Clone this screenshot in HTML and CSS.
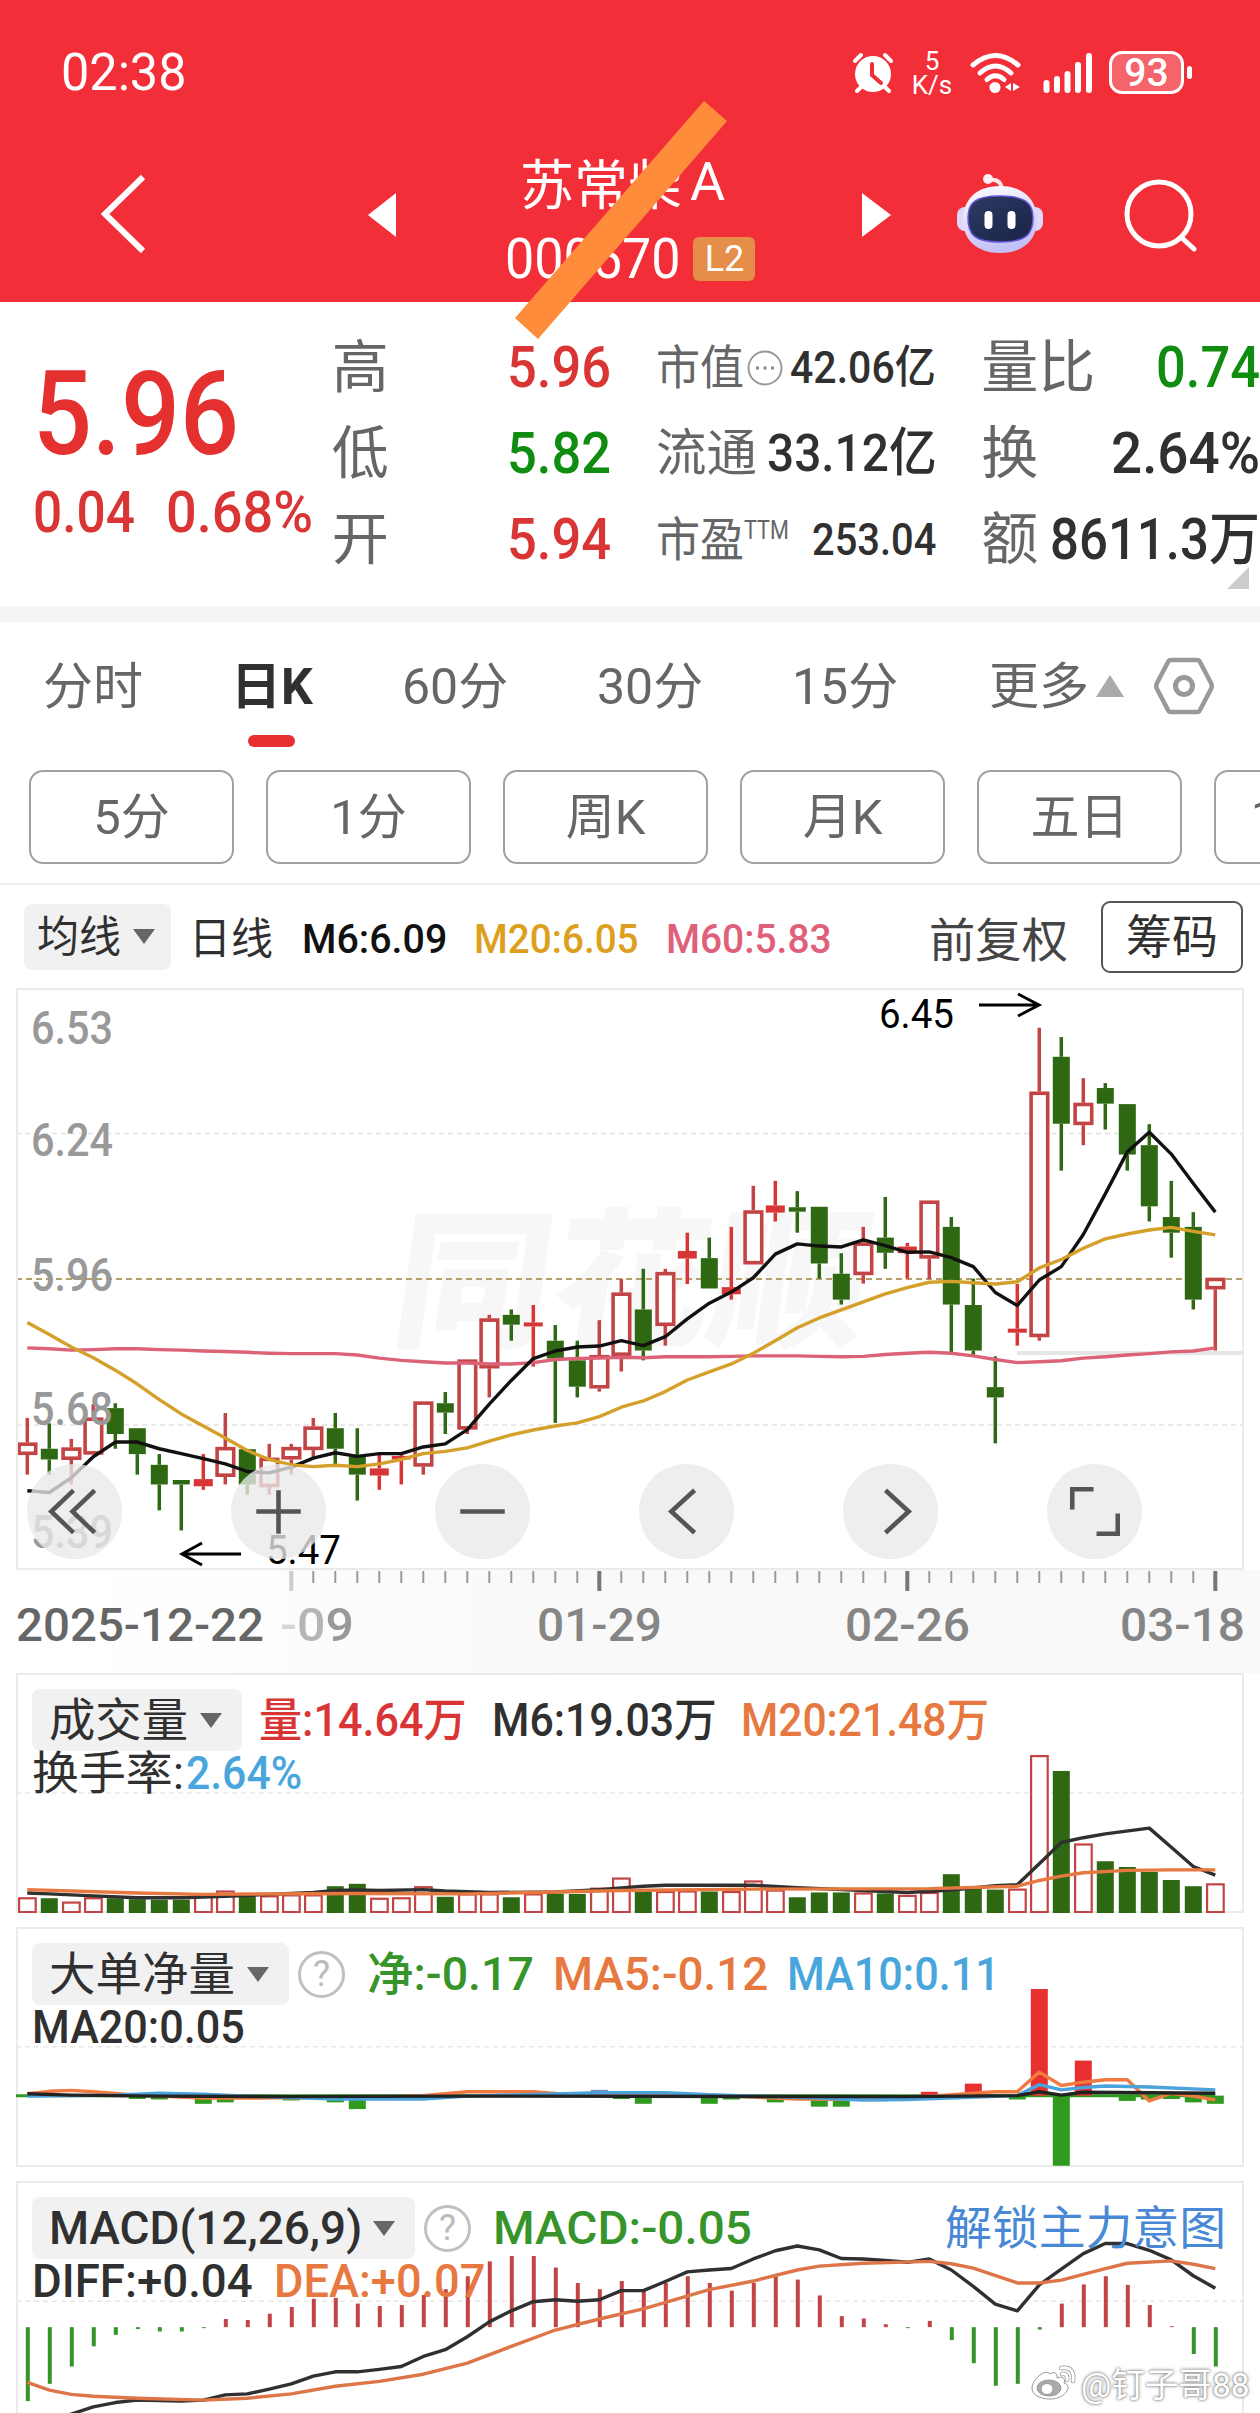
FILE: index.html
```html
<!DOCTYPE html>
<html lang="zh-CN">
<head>
    <meta charset="UTF-8">
    <meta name="viewport" content="width=device-width, initial-scale=1.0">
    <title>苏常柴A 000570</title>
    <link rel="stylesheet" href="styles.css">
</head>
<body>
    <header class="header">
        <div class="status-bar">
            <span class="time fit" data-w="126">02:38</span>
            <div class="status-icons">
                <svg class="alarm" width="42" height="42" viewBox="0 0 42 42">
                    <g stroke="#fff" stroke-width="4" stroke-linecap="round" fill="none">
                        <path d="M3 9l6-6M39 9l-6-6M10 34l-5 5M32 34l5 5"/>
                    </g>
                    <circle cx="21" cy="22" r="18" fill="#fff"/>
                    <path d="M20 12v11l9 8" stroke="#f22e38" stroke-width="4" fill="none" stroke-linecap="round"/>
                </svg>
                <div class="speed"><span>5</span><span>K/s</span></div>
                <svg class="wifi" width="51" height="42" viewBox="0 0 51 42">
                    <g stroke="#fff" stroke-width="5" stroke-linecap="round" fill="none">
                        <path d="M3 13Q25.500-6 48 13"/>
                        <path d="M10 21Q25.500 7 41 21"/>
                        <path d="M17 27.500Q25.500 20 34 27.500"/>
                    </g>
                    <circle cx="25" cy="35.500" r="5.500" fill="#fff"/>
                    <path d="M41 31v8l-6-4zM43 31v8l7-4z" fill="#fff"/>
                </svg>
                <svg class="signal" width="50" height="42" viewBox="0 0 50 42">
                    <path d="M3.500 31v7M14 27v11M24.500 22v16M35 13v25M46 4v34" stroke="#fff" stroke-width="6" stroke-linecap="round"/>
                </svg>
                <div class="battery">93</div>
            </div>
        </div>
        <nav class="nav-bar">
            <svg class="back" width="46" height="80" viewBox="0 0 46 80"><path d="M42 3L4 40l38 37" fill="none" stroke="#fff" stroke-width="6"/></svg>
            <svg class="prev" width="28" height="44" viewBox="0 0 28 44"><path d="M28 0v44L0 22z" fill="#fff"/></svg>
            <div class="title">
                <div class="stock-name">苏常柴<span>A</span></div>
                <div class="stock-code"><span class="fit" data-w="175">000570</span><span class="level">L2</span></div>
            </div>
            <svg class="next" width="29" height="44" viewBox="0 0 29 44"><path d="M0 0v44l29-22z" fill="#fff"/></svg>
            <svg class="robot" width="88" height="82" viewBox="0 0 88 82">
                <defs>
                    <linearGradient id="head" x1="0" y1="0" x2="0.3" y2="1">
                        <stop offset="0" stop-color="#fff"/><stop offset=".5" stop-color="#e3e0fb"/><stop offset="1" stop-color="#c3c0f5"/>
                    </linearGradient>
                    <linearGradient id="face" x1="0" y1="0" x2="1" y2="1">
                        <stop offset="0" stop-color="#2d3a63"/><stop offset="1" stop-color="#1a2348"/>
                    </linearGradient>
                </defs>
                <path d="M33 7q11-2 13 8" fill="none" stroke="#ffe3ea" stroke-width="4"/>
                <circle cx="32" cy="6" r="5" fill="#ffeef2"/>
                <rect x="1" y="34" width="86" height="24" rx="8" fill="#dcd9fa"/>
                <path d="M44 13c24 0 37 14 37 34S67 80 44 80 7 67 7 47s13-34 37-34z" fill="url(#head)"/>
                <path d="M44 23c25 0 33 7 33 22 0 17-8 24-33 24S12 62 12 45c0-15 7-22 32-22z" fill="url(#face)" stroke="#6254d8" stroke-width="1.500"/>
                <path d="M32.500 42v10M55.500 42v10" stroke="#fff" stroke-width="8" stroke-linecap="round"/>
            </svg>
            <svg class="search" width="76" height="76" viewBox="0 0 76 76"><circle cx="36" cy="36" r="32" fill="none" stroke="#fff" stroke-width="5"/><path d="M59 60l12 11" stroke="#fff" stroke-width="5" stroke-linecap="round"/></svg>
        </nav>
        <svg class="slash" width="212" height="238" viewBox="0 0 212 238"><path d="M189 0l23 20L23 238 0 217z" fill="#ff8c3a"/></svg>
    </header>

    <section class="quote">
        <div class="price">
            <div class="last"><span class="fit" data-w="206">5.96</span></div>
            <div class="change"><span class="fit" data-w="102">0.04</span><span class="fit" data-w="147">0.68%</span></div>
        </div>
        <div class="col">
            <div class="row"><label>高</label><b class="red"><span class="fit" data-w="104">5.96</span></b></div>
            <div class="row"><label>低</label><b class="green"><span class="fit" data-w="104">5.82</span></b></div>
            <div class="row"><label>开</label><b class="red"><span class="fit" data-w="104">5.94</span></b></div>
        </div>
        <div class="col small">
            <div class="row"><label><span class="fit" data-w="88">市值</span><svg class="dots" width="38" height="38" viewBox="0 0 38 38"><circle cx="19" cy="19" r="16.500" fill="none" stroke="#999" stroke-width="2"/><path d="M10 19h3M17.500 19h3M25 19h3" stroke="#888" stroke-width="3"/></svg></label><b><span class="fit" data-w="146">42.06亿</span></b></div>
            <div class="row wide"><label><span class="fit" data-w="101">流通</span></label><b><span class="fit" data-w="170">33.12亿</span></b></div>
            <div class="row"><label><span class="fit" data-w="88">市盈</span><sup><span class="fit" data-w="45">TTM</span></sup></label><b><span class="fit" data-w="124">253.04</span></b></div>
        </div>
        <div class="col last-col">
            <div class="row"><label>量比</label><b class="green"><span class="fit" data-w="104">0.74</span></b></div>
            <div class="row"><label>换</label><b><span class="fit" data-w="149">2.64%</span></b></div>
            <div class="row"><label>额</label><b><span class="fit" data-w="210">8611.3万</span></b></div>
        </div>
        <i class="corner"></i>
    </section>

    <nav class="tabs">
        <span>分时</span>
        <span class="active">日K</span>
        <span>60分</span>
        <span>30分</span>
        <span>15分</span>
        <span class="more">更多</span>
        <i class="tri-up"></i>
        <svg class="setting" width="60" height="58" viewBox="0 0 60 58"><path d="M17 3h26q2 0 3 2l11 21q1.500 3 0 6L46 53q-1 2-3 2H17q-2 0-3-2L3 32q-1.500-3 0-6L14 5q1-2 3-2z" fill="none" stroke="#999" stroke-width="4.500"/><circle cx="30" cy="29" r="8.500" fill="none" stroke="#999" stroke-width="5"/></svg>
    </nav>
    <div class="periods">
        <span>5分</span><span>1分</span><span>周K</span><span>月K</span><span>五日</span><span>120分</span>
    </div>

    <div class="ma-bar">
        <div class="pill"><span class="fit" data-w="84">均线</span><i class="tri-down"></i></div>
        <span class="fit day" data-w="84">日线</span>
        <span class="fit ma6" data-w="145">M6:6.09</span>
        <span class="fit ma20" data-w="165">M20:6.05</span>
        <span class="fit ma60" data-w="166">M60:5.83</span>
        <span class="fit restore" data-w="139">前复权</span>
        <span class="chip">筹码</span>
    </div>

    <section class="k-panel">
        <svg id="kChart" width="1228" height="582" viewBox="16 988 1228 582"></svg>
        <div class="controls">
            <button><svg viewBox="0 0 94 94"><path d="M46 26L24 47l22 21M67 26L45 47l22 21"/></svg></button>
            <button><svg viewBox="0 0 94 94"><path d="M25 47h44M47 26v43"/></svg></button>
            <button><svg viewBox="0 0 94 94"><path d="M25 47h44"/></svg></button>
            <button><svg viewBox="0 0 94 94"><path d="M55 26L32 47l23 21"/></svg></button>
            <button><svg viewBox="0 0 94 94"><path d="M42 26l23 21-23 21"/></svg></button>
            <button><svg viewBox="0 0 94 94"><path d="M25 45V25h21M49 69h21V49"/></svg></button>
        </div>
    </section>
    <svg id="axis" width="1260" height="103" viewBox="0 1570 1260 103"></svg>

    <section class="panel volume">
        <svg id="volChart" width="1228" height="240" viewBox="16 1673 1228 240"></svg>
        <div class="line">
            <div class="pill"><span class="fit" data-w="139">成交量</span><i class="tri-down"></i></div>
            <span class="fit red" data-w="208">量:14.64万</span>
            <span class="fit" data-w="225">M6:19.03万</span>
            <span class="fit orange" data-w="248">M20:21.48万</span>
        </div>
        <div class="line second"><span class="fit" data-w="152">换手率:</span><span class="fit blue" data-w="116">2.64%</span></div>
    </section>

    <section class="panel net">
        <svg id="netChart" width="1228" height="240" viewBox="16 1927 1228 240"></svg>
        <div class="line">
            <div class="pill"><span class="fit" data-w="186">大单净量</span><i class="tri-down"></i></div>
            <i class="help">?</i>
            <span class="fit green" data-w="167">净:-0.17</span>
            <span class="fit orange" data-w="215">MA5:-0.12</span>
            <span class="fit blue" data-w="213">MA10:0.11</span>
        </div>
        <div class="line second"><span class="fit" data-w="213">MA20:0.05</span></div>
    </section>

    <section class="panel macd">
        <svg id="macdChart" width="1228" height="232" viewBox="16 2181 1228 232"></svg>
        <div class="line">
            <div class="pill"><span class="fit" data-w="313">MACD(12,26,9)</span><i class="tri-down"></i></div>
            <i class="help">?</i>
            <span class="fit green" data-w="259">MACD:-0.05</span>
            <span class="fit unlock" data-w="281">解锁主力意图</span>
        </div>
        <div class="line second"><span class="fit" data-w="221">DIFF:+0.04</span><span class="fit orange dea" data-w="211">DEA:+0.07</span></div>
    </section>

    <div class="author">
        <svg width="46" height="36" viewBox="0 0 46 36">
            <g fill="#fff" stroke="#999" stroke-width="1">
                <path d="M19 9c4-3 8-1 7 4 5-2 9 0 7 5 4 1 5 4 3 8-3 5-9 8-17 8C9 34 1 30 1 23 1 15 14 3 19 9z"/>
                <ellipse cx="18" cy="23" rx="12" ry="8" fill="#aaa"/>
                <ellipse cx="16" cy="24" rx="6" ry="5.500"/>
            </g>
            <path d="M31 9q6-1 5 6M30 3q14-2 12 13" fill="none" stroke="#999" stroke-width="4.500" stroke-linecap="round"/>
            <path d="M31 9q6-1 5 6M30 3q14-2 12 13" fill="none" stroke="#fff" stroke-width="3" stroke-linecap="round"/>
        </svg>
        <span class="fit" data-w="169">@钉子哥88</span>
    </div>

    <script src="chart.js"></script>
</body>
</html>
```
FILE: styles.css
```css
* {
    box-sizing: border-box;
}

body {
    margin: 0;
    width: 1260px;
    height: 2413px;
    overflow: hidden;
    position: relative;
    background: #fff;
    color: #303030;
    font-family: Roboto, "Noto Sans CJK SC", sans-serif;
}

svg {
    display: block;
    flex: none;
}

i {
    font-style: normal;
}

.fit {
    display: inline-block;
    flex: none;
    white-space: nowrap;
    transform-origin: 0 50%;
}

.red { color: #d93535; }
.green { color: #108c10; }
.orange { color: #e67840; }
.blue { color: #48a6dc; }

/* header */
.header {
    height: 302px;
    background: #f22e38;
    color: #fff;
    position: relative;
}

.status-bar {
    display: flex;
    justify-content: space-between;
    align-items: center;
    height: 145px;
    padding: 0 68px 0 61px;
}

.time {
    font-size: 52px;
}

.status-icons {
    display: flex;
    align-items: center;
}

.speed {
    display: flex;
    flex-direction: column;
    align-items: center;
    width: 40px;
    margin: 0 18px;
    font-size: 26px;
    line-height: 24px;
}

.signal {
    margin: 0 16px 0 22px;
}

.battery {
    position: relative;
    width: 75px;
    height: 43px;
    margin-right: 8px;
    border: 3px solid #fff;
    border-radius: 13px;
    background: #f5636b;
    font-size: 39px;
    font-weight: 500;
    line-height: 39px;
    text-align: center;
}

.battery::after {
    content: '';
    position: absolute;
    right: -11px;
    top: 12px;
    width: 5px;
    height: 13px;
    border-radius: 3px;
    background: #fff;
}

.nav-bar {
    display: flex;
    align-items: center;
    height: 157px;
    padding-left: 101px;
}

.back { margin-top: -20px; }
.prev { margin: -18px 0 0 221px; }

.title {
    width: 280px;
    margin: -4px 0 0 98px;
    padding-left: 11px;
}

.stock-name {
    display: flex;
    align-items: center;
    height: 74px;
    padding: 0 0 6px 15px;
    font-size: 54px;
}

.stock-name span {
    margin-left: 8px;
}

.stock-code {
    display: flex;
    align-items: center;
    height: 74px;
    font-size: 55px;
}

.level {
    width: 62px;
    height: 44px;
    margin-left: 13px;
    border-radius: 6px;
    background: #e58e49;
    font-size: 36px;
    line-height: 44px;
    text-align: center;
}

.next { margin: -18px 0 0 88px; }
.robot { margin: -20px 0 0 65px; }
.search { margin: -16px 0 0 79px; }

.slash {
    position: absolute;
    left: 515px;
    top: 101px;
    z-index: 2;
}

/* quote */
.quote {
    position: relative;
    display: flex;
    height: 304px;
    padding-top: 23px;
}

.price {
    width: 332px;
    padding-left: 33px;
    color: #e53030;
    font-weight: 500;
}

.last {
    height: 137px;
    margin-top: 18px;
    font-size: 117px;
    line-height: 142px;
}

.change {
    display: flex;
    gap: 31px;
    height: 60px;
    font-size: 57px;
    line-height: 66px;
    color: #d93535;
}

.col {
    width: 280px;
    margin-right: 45px;
}

.row {
    display: flex;
    justify-content: space-between;
    align-items: center;
    height: 86px;
    line-height: 86px;
}

.row label {
    display: flex;
    align-items: center;
    color: #666;
    font-size: 57px;
}

.row b {
    font-weight: 500;
    font-size: 57px;
}

.small .row label { font-size: 47px; }
.small .row b { font-size: 45px; }
.small .wide label { font-size: 51px; }
.small .wide b { font-size: 52px; }
.dots { margin-left: 2px; }

.row sup {
    font-size: 26px;
    line-height: 1;
    margin-top: -20px;
}

.last-col {
    margin-right: 0;
    width: 279px;
}

.corner {
    position: absolute;
    right: 11px;
    bottom: 17px;
    border-left: 22px solid transparent;
    border-bottom: 22px solid #ccc;
}

/* tabs */
.tabs {
    display: flex;
    align-items: center;
    height: 164px;
    padding: 0 48px 20px 43px;
    border-top: 16px solid #f5f5f5;
    font-size: 50px;
    color: #666;
}

.tabs span {
    flex: none;
    width: 195px;
    margin-top: -8px;
}

.tabs span:first-child { width: 188px; }
.tabs span:nth-child(2) { width: 171px; }
.tabs span:nth-child(5) { width: 197px; }

.tabs .active {
    position: relative;
    font-weight: 700;
    color: #303030;
}

.active::after {
    content: '';
    position: absolute;
    left: 17px;
    bottom: -29px;
    width: 47px;
    height: 12px;
    border-radius: 6px;
    background: #e83030;
}

.tabs .more { width: 107px; }

.tri-up {
    border: 14px solid transparent;
    border-top: 0;
    border-bottom: 22px solid #aaa;
}

.setting { margin-left: 30px; }

.periods {
    display: flex;
    gap: 32px;
    height: 115px;
    padding-left: 29px;
    overflow: hidden;
    border-bottom: 2px solid #eee;
}

.periods span {
    flex: none;
    width: 205px;
    height: 94px;
    border: 2px solid #a0a0a0;
    border-radius: 14px;
    font-size: 49px;
    line-height: 92px;
    text-align: center;
    color: #666;
}

/* MA legend */
.ma-bar {
    display: flex;
    align-items: center;
    height: 103px;
    padding: 0 17px 0 24px;
    font-size: 43px;
    line-height: 60px;
}

.pill {
    display: flex;
    align-items: center;
    justify-content: space-between;
    flex: none;
    height: 66px;
    padding: 0 16px 0 13px;
    width: 147px;
    border-radius: 8px;
    background: #f1f1f1;
}

.tri-down {
    border: 11px solid transparent;
    border-bottom: 0;
    border-top: 15px solid #666;
}

.day {
    margin-left: 18px;
    padding-top: 4px;
}

.ma6, .ma20, .ma60 {
    font-size: 41px;
    font-weight: 500;
    padding-top: 5px;
}

.ma6 { color: #111; margin-left: 29px; }
.ma20 { color: #dca01e; margin-left: 27px; }
.ma60 { color: #e0607c; margin-left: 27px; }

.restore {
    font-size: 47px;
    margin-left: 98px;
    padding-top: 8px;
    color: #444;
}

.chip {
    width: 142px;
    height: 72px;
    margin-left: auto;
    border: 2px solid #555;
    border-radius: 9px;
    font-size: 46px;
    line-height: 68px;
    text-align: center;
}

/* charts */
.k-panel {
    position: relative;
    height: 582px;
    margin: 0 16px;
}

.k-panel, .panel {
    outline: 2px solid #ebebeb;
    outline-offset: -2px;
}

.controls {
    position: absolute;
    left: 11px;
    top: 476px;
    display: flex;
    gap: 109px;
}

.controls button {
    width: 95px;
    height: 95px;
    padding: 0;
    border: 0;
    border-radius: 50%;
    background: rgba(233, 233, 233, 0.78);
}

.controls path {
    fill: none;
    stroke: #555;
    stroke-width: 4.5;
}

#axis {
    background: linear-gradient(90deg, #fff 5%, #f9f9f9 45%);
}

text {
    font-family: Roboto, "Noto Sans CJK SC", sans-serif;
}

.panel {
    position: relative;
    height: 240px;
    margin: 0 16px 14px;
    padding-top: 16px;
}

.panel > svg {
    position: absolute;
    left: 0;
    top: 0;
}

.macd {
    height: 240px;
    margin-bottom: 0;
}

.line {
    position: relative;
    display: flex;
    align-items: center;
    gap: 25px;
    height: 62px;
    padding-left: 16px;
    font-size: 46px;
    font-weight: 500;
    line-height: 64px;
}

.line .red { margin-left: -8px; }
.line .green { color: #36942a; margin-left: 3px; }
.net .line { gap: 19px; }
.net .help, .macd .help { margin-left: -10px; }
.macd .line { gap: 19px; }

.line .pill {
    height: 62px;
    width: 210px;
    padding: 0 20px 0 17px;
    font-weight: 400;
}

.net .pill { width: 257px; }
.macd .pill { width: 383px; font-weight: 500; }

.second {
    height: 44px;
    line-height: 44px;
    font-weight: 400;
    gap: 0;
}

.second .blue { font-weight: 500; }
.net .second, .macd .second { font-weight: 500; }
.volume .second, .net .second, .macd .second { gap: 2px; }
.macd .dea { margin-left: 19px; }

.help {
    width: 47px;
    height: 47px;
    border: 3px solid #c0c0c0;
    border-radius: 50%;
    font-size: 36px;
    font-weight: 400;
    line-height: 41px;
    text-align: center;
    color: #bbb;
}

.unlock {
    margin-left: 174px;
    color: #4888d4;
    font-weight: 400;
}

.author {
    position: absolute;
    right: 10px;
    bottom: 6px;
    display: flex;
    align-items: center;
    gap: 4px;
    font-size: 34px;
    color: #fff;
    text-shadow: 0 0 2px #777, 0 0 4px #888;
}
```
FILE: chart.js
```js
// candles: kind, body top, body bottom, high, low
// r = hollow up, R = flat up, g = down
const candles = [
    ['r', 1036, 1064, 981, 1108], ['g', 1050, 1074, 993, 1108], ['r', 1047, 1075, 1028, 1130],
    ['r', 980, 1063, 950, 1063], ['g', 959, 1017, 948, 1050], ['g', 1004, 1062, 1004, 1108],
    ['g', 1086, 1130, 1062, 1188], ['g', 1120, 1130, 1120, 1233], ['R', 1118, 1134, 1062, 1142],
    ['r', 1046, 1113, 970, 1130], ['g', 1051, 1130, 1051, 1153], ['r', 1070, 1136, 1039, 1153],
    ['r', 1046, 1074, 1039, 1108], ['r', 1000, 1053, 981, 1070], ['g', 1004, 1050, 970, 1085],
    ['g', 1068, 1108, 1004, 1166], ['R', 1094, 1110, 1062, 1142], ['R', 1066, 1074, 1062, 1130],
    ['r', 944, 1090, 944, 1108], ['g', 948, 969, 923, 1017], ['r', 850, 1007, 850, 1017],
    ['r', 758, 870, 750, 935], ['g', 750, 772, 738, 808], ['R', 767, 776, 728, 866],
    ['g', 808, 848, 773, 992], ['g', 852, 911, 808, 935], ['r', 840, 915, 762, 922],
    ['r', 700, 842, 670, 877], ['g', 738, 830, 647, 852], ['r', 654, 775, 647, 819],
    ['R', 607, 624, 566, 681], ['g', 623, 691, 577, 691], ['R', 688, 704, 553, 716],
    ['r', 516, 637, 461, 637], ['R', 505, 521, 450, 541], ['g', 509, 519, 473, 566],
    ['g', 508, 635, 508, 669], ['g', 658, 716, 612, 727], ['r', 588, 661, 553, 680],
    ['g', 577, 611, 486, 647], ['R', 597, 612, 589, 669], ['r', 494, 624, 494, 670],
    ['g', 553, 727, 531, 836], ['g', 728, 830, 669, 840], ['g', 912, 935, 843, 1038],
    ['R', 781, 790, 681, 819], ['r', 250, 800, 107, 808], ['g', 172, 322, 128, 427],
    ['r', 275, 325, 220, 370], ['g', 242, 277, 231, 335], ['g', 278, 391, 278, 427],
    ['g', 370, 507, 323, 541], ['g', 531, 566, 450, 622], ['g', 553, 716, 520, 738],
    ['r', 667, 693, 667, 830]
];
const ma6 = [1144, 1148, 1115, 1068, 1035, 1035, 1050, 1061, 1072, 1084, 1101, 1104, 1091, 1071, 1059, 1067, 1061, 1061, 1046, 1039, 1007, 950, 897, 848, 831, 822, 820, 808, 819, 799, 759, 724, 699, 667, 614, 591, 596, 598, 582, 595, 610, 609, 622, 642, 700, 729, 672, 642, 570, 479, 385, 341, 390, 456, 520];
const ma20 = [767, 794, 822, 846, 874, 905, 940, 972, 999, 1026, 1054, 1074, 1086, 1090, 1087, 1090, 1084, 1074, 1061, 1056, 1048, 1033, 1019, 1008, 999, 992, 978, 957, 943, 922, 896, 878, 860, 836, 808, 779, 757, 739, 721, 703, 689, 677, 675, 678, 681, 676, 645, 626, 601, 580, 569, 560, 554, 563, 571];
const ma60 = [824, 826, 829, 828, 826, 826, 828, 829, 831, 832, 834, 836, 837, 837, 837, 840, 847, 852, 855, 858, 858, 860, 860, 857, 850, 848, 847, 845, 846, 844, 844, 844, 843, 842, 842, 842, 843, 844, 843, 839, 836, 834, 836, 842, 850, 857, 855, 853, 847, 844, 840, 837, 833, 831, 824];

const volume = [494, 496, 503, 494, 496, 498, 499, 499, 488, 480, 491, 490, 488, 488, 471, 466, 495, 494, 471, 493, 486, 486, 494, 486, 487, 487, 474, 453, 481, 481, 480, 482, 481, 459, 478, 494, 484, 484, 484, 486, 489, 483, 446, 474, 478, 476, 198, 231, 382, 419, 431, 441, 458, 471, 465];
const volMa6 = [[0, 485], [1, 487], [3, 491], [5, 495], [7, 495], [9, 492], [11, 488], [13, 484], [14, 480], [15, 479], [16, 480], [18, 478], [19, 481], [21, 484], [24, 483], [26, 478], [28, 471], [29, 469], [33, 469], [35, 474], [38, 480], [40, 484], [42, 479], [44, 470], [45, 468], [46, 424], [47, 380], [48, 370], [49, 362], [51, 350], [52, 390], [53, 430], [54, 448]];
const volMa20 = [[0, 478], [5, 485], [8, 488], [15, 486], [20, 487], [24, 483], [27, 480], [33, 477], [41, 476], [45, 471], [46, 459], [47, 450], [48, 443], [50, 438], [52, 437], [54, 437]];

const net = [[5, 914], [6, 915], [8, 924], [9, 921], [12, 917], [14, 921], [15, 935], [26, 895], [27, 914], [28, 924], [31, 924], [32, 915], [34, 921], [36, 930], [37, 930], [41, 899], [43, 882], [45, 915], [46, 685], [47, 1053], [48, 834], [50, 918], [51, 915], [52, 914], [53, 921], [54, 924]];
const netMa5 = [[0, 903], [1, 898], [2, 896], [3, 899], [5, 906], [8, 912], [10, 912], [13, 911], [16, 910], [18, 907], [20, 899], [23, 899], [25, 906], [28, 905], [32, 908], [35, 914], [39, 915], [43, 902], [44, 899], [45, 899], [46, 858], [47, 886], [48, 879], [49, 874], [50, 874], [51, 918], [52, 902], [53, 908], [54, 916]];
const netMa10 = [[0, 908], [4, 906], [6, 902], [8, 904], [10, 908], [14, 914], [18, 914], [20, 908], [26, 901], [29, 901], [31, 905], [36, 912], [38, 916], [40, 915], [45, 907], [46, 884], [47, 895], [48, 890], [49, 887], [51, 889], [54, 895]];
const netMa20 = [[0, 903], [2, 906], [6, 908], [12, 909], [20, 908], [40, 909], [45, 907], [46, 899], [47, 906], [48, 900], [54, 902]];

const macd = [1543, 1507, 1471, 1429, 1405, 1393, 1398, 1398, 1391, 1372, 1374, 1361, 1347, 1330, 1328, 1340, 1345, 1343, 1322, 1310, 1283, 1252, 1241, 1241, 1265, 1297, 1310, 1293, 1314, 1297, 1283, 1297, 1313, 1297, 1284, 1290, 1323, 1366, 1371, 1383, 1391, 1376, 1416, 1464, 1511, 1507, 1394, 1340, 1300, 1283, 1301, 1343, 1387, 1445, 1471];
const diff = [[0, 1590], [1, 1580], [2, 1570], [3, 1555], [4, 1546], [5, 1541], [7, 1543], [8, 1541], [9, 1530], [10, 1528], [11, 1518], [12, 1507], [13, 1491], [14, 1482], [15, 1482], [16, 1477], [17, 1471], [18, 1450], [19, 1436], [20, 1409], [21, 1378], [22, 1355], [23, 1336], [24, 1332], [25, 1335], [26, 1332], [27, 1313], [28, 1313], [29, 1294], [30, 1274], [31, 1270], [32, 1267], [33, 1247], [34, 1230], [35, 1220], [36, 1228], [37, 1246], [38, 1247], [39, 1250], [40, 1254], [41, 1247], [42, 1270], [43, 1304], [44, 1341], [45, 1355], [46, 1301], [47, 1268], [48, 1236], [49, 1215], [50, 1215], [51, 1229], [52, 1249], [53, 1282], [54, 1308]];
const dea = [[0, 1504], [1, 1520], [2, 1529], [3, 1533], [5, 1537], [8, 1541], [10, 1537], [12, 1528], [14, 1512], [16, 1502], [18, 1487], [20, 1464], [22, 1429], [24, 1395], [26, 1372], [28, 1351], [31, 1311], [33, 1293], [35, 1270], [36, 1262], [38, 1256], [41, 1252], [42, 1257], [43, 1266], [45, 1297], [46, 1297], [47, 1291], [49, 1267], [50, 1256], [52, 1251], [53, 1258], [54, 1267]];

const GREEN = '#2f6812';
const RED = '#c24444';
const x = i => 27.3 + i * 22;
const ky = v => 980 + v / 2.24;
const py = v => 1660 + v / 2.082;

function rect(left, top, w, h, fill, stroke, sw) {
    return `<rect x="${left}" y="${top}" width="${w}" height="${h}" fill="${fill}" stroke="${stroke || 'none'}" stroke-width="${sw || 0}"/>`;
}

function seg(x1, y1, x2, y2, color, w, dash) {
    return `<path d="M${x1} ${y1}L${x2} ${y2}" stroke="${color}" stroke-width="${w}" stroke-dasharray="${dash || 'none'}" fill="none"/>`;
}

function line(points, scale, color, w) {
    const d = points.map(p => x(p[0]) + ',' + scale(p[1])).join(' ');
    return `<polyline points="${d}" fill="none" stroke="${color}" stroke-width="${w || 3.4}" stroke-linejoin="round"/>`;
}

function label(str, left, base, w, size, color, weight) {
    return `<text x="${left}" y="${base}" font-size="${size}" font-weight="${weight || 400}" fill="${color}" textLength="${w}" lengthAdjust="spacingAndGlyphs">${str}</text>`;
}

function drawK() {
    let s = '<text transform="translate(388 1335) skewX(-8)" font-size="150" font-weight="900" fill="#f7f7f7" textLength="474" lengthAdjust="spacingAndGlyphs">同花顺</text>';
    s += seg(16, 1133.5, 1244, 1133.5, '#e2e2e2', 1.5, '5 4');
    s += seg(16, 1425, 1244, 1425, '#e2e2e2', 1.5, '5 4');
    s += seg(16, 1279, 1244, 1279, '#b5a06a', 1.8, '6 4');
    s += seg(1017, 1353, 1244, 1353, '#e6e6e6', 4);
    candles.forEach(([kind, top, bottom, high, low], i) => {
        const color = kind === 'g' ? GREEN : kind === 'R' ? '#d83636' : RED;
        const w = kind === 'g' ? 17 : 19;
        const a = ky(top), b = ky(bottom);
        s += seg(x(i), ky(high), x(i), a, color, 3.5) + seg(x(i), b, x(i), ky(low), color, 3.5);
        if (kind === 'r') {
            s += rect(x(i) - 8.2, a + 1.7, 16.6, b - a - 3.4, '#fff', color, 3.6);
        } else {
            s += rect(x(i) - w / 2, a, w, b - a, color);
        }
    });
    s += line(ma60.map((v, i) => [i, v]), ky, '#dc6278');
    s += line(ma6.map((v, i) => [i, v]), ky, '#111');
    s += line(ma20.map((v, i) => [i, v]), ky, '#d4a02a');
    [['6.53', 1044], ['6.24', 1156], ['5.96', 1291], ['5.68', 1425], ['5.39', 1548]].forEach(([t, y]) => {
        s += label(t, 31, y, 82, 47, '#999', 500);
    });
    s += label('6.45', 879, 1028, 75, 40, '#000');
    s += '<path d="M979 1005h59M1018 994l21 11-21 11" fill="none" stroke="#000" stroke-width="3"/>';
    s += label('5.47', 266, 1564, 75, 40, '#000');
    s += '<path d="M241 1554h-59M202 1543l-20 11 20 11" fill="none" stroke="#000" stroke-width="3"/>';
    document.getElementById('kChart').innerHTML = s;
}

function drawAxis() {
    let s = '';
    for (let i = 12; i < 55; i++) {
        const major = (i - 12) % 14 === 0;
        s += seg(x(i), 1571, x(i), major ? 1591 : 1583, i === 12 ? '#ccc' : major ? '#777' : '#999', major ? 4 : 2);
    }
    s += label('2025-12-22', 16, 1641, 248, 47, '#666', 500);
    s += label('<tspan fill="#d5d5d5">-</tspan><tspan fill="#b5b5b5">0</tspan><tspan fill="#999">9</tspan>', 280, 1641, 74, 47, '#aaa', 500);
    s += label('01-29', 537, 1641, 125, 47, '#858585', 500);
    s += label('02-26', 845, 1641, 125, 47, '#858585', 500);
    s += label('03-18', 1120, 1641, 125, 47, '#858585', 500);
    document.getElementById('axis').innerHTML = s;
}

function drawVolume() {
    let s = seg(16, py(277), 1244, py(277), '#e8e8e8', 1.5, '5 4');
    volume.forEach((v, i) => {
        const h = py(527) - py(v);
        if (candles[i][0] === 'g') {
            s += rect(x(i) - 8.5, py(v), 17, h, GREEN);
        } else {
            s += rect(x(i) - 8.2, py(v) + 1, 16.6, h - 2, '#fff', RED, 2.2);
        }
    });
    s += line(volMa6, py, '#303030') + line(volMa20, py, '#e67840');
    document.getElementById('volChart').innerHTML = s;
}

function drawNet() {
    const zero = py(907);
    let s = seg(16, py(805), 1244, py(805), '#e8e8e8', 1.5, '5 4');
    s += seg(16, zero, x(54), zero, '#2f9a1e', 3);
    net.forEach(([i, v]) => {
        const y = py(v);
        s += rect(x(i) - 8.5, Math.min(y, zero), 17, Math.abs(y - zero), y > zero ? '#2f9a1e' : i === 26 ? '#8a7fae' : '#e83030');
    });
    s += line(netMa5, py, '#f07a40') + line(netMa10, py, '#4ba3dc') + line(netMa20, py, '#222');
    document.getElementById('netChart').innerHTML = s;
}

function drawMacd() {
    const zero = py(1389);
    let s = seg(16, py(1335), 1244, py(1335), '#e8e8e8', 1.5, '5 4');
    macd.forEach((v, i) => {
        s += seg(x(i) + 0.5, zero, x(i) + 0.5, py(v), v > 1389 ? '#36942a' : RED, 4);
    });
    s += line(diff, py, '#303030') + line(dea, py, '#dd7548');
    document.getElementById('macdChart').innerHTML = s;
}

// squeeze the numbers to the widths of the narrow quote font
function fitText() {
    document.querySelectorAll('.fit').forEach(el => {
        const natural = el.offsetWidth;
        const w = Number(el.dataset.w);
        el.style.transform = `scaleX(${w / natural})`;
        el.style.marginRight = (w - natural) + 'px';
    });
}

drawK();
drawAxis();
drawVolume();
drawNet();
drawMacd();
fitText();
```
